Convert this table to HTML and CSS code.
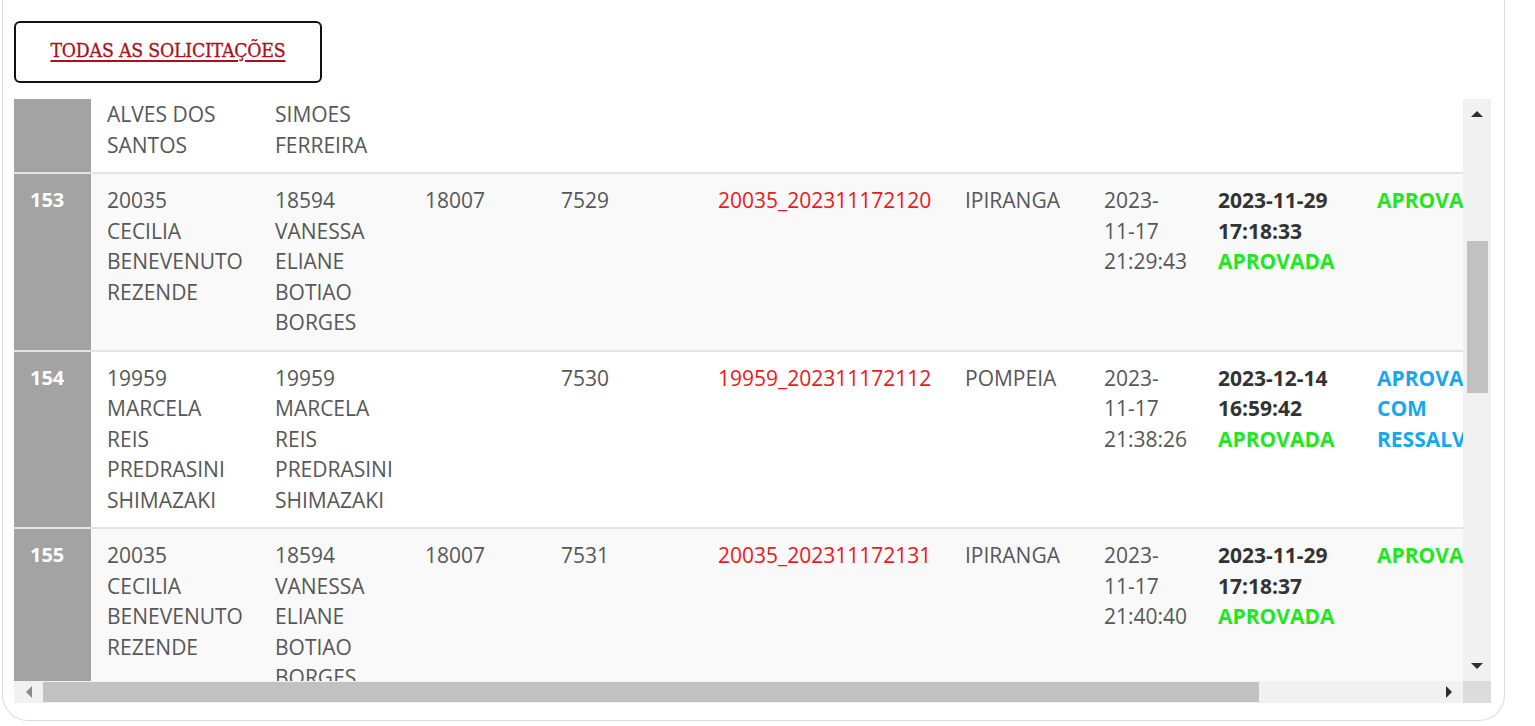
FILE: index.html
```html
<!DOCTYPE html>
<html lang="pt-BR">
<head>
<meta charset="utf-8">
<title>Solicitações</title>
<link rel="stylesheet" href="styles.css">
</head>
<body>
<div class="card">
  <div class="btn-row">
    <a class="btn-all" href="#">TODAS AS SOLICITAÇÕES</a>
  </div>
  <div class="viewport">
    <div class="content">
      <table class="grid">
        <colgroup>
          <col class="c0"><col class="c1"><col class="c2"><col class="c3"><col class="c4">
          <col class="c5"><col class="c6"><col class="c7"><col class="c8"><col class="c9">
        </colgroup>
        <tbody>
          <tr class="row cut">
            <td class="num"></td>
            <td>ALVES DOS<br>SANTOS</td>
            <td>SIMOES<br>FERREIRA</td>
            <td></td><td></td><td></td><td></td><td></td><td></td><td></td>
          </tr>
          <tr class="row alt">
            <td class="num">153</td>
            <td>20035<br>CECILIA<br>BENEVENUTO<br>REZENDE</td>
            <td>18594<br>VANESSA<br>ELIANE<br>BOTIAO<br>BORGES</td>
            <td>18007</td>
            <td>7529</td>
            <td class="red">20035_202311172120</td>
            <td>IPIRANGA</td>
            <td>2023-<br>11-17<br>21:29:43</td>
            <td class="strong">2023-11-29<br>17:18:33<br><span class="green">APROVADA</span></td>
            <td class="strong green">APROVADA</td>
          </tr>
          <tr class="row">
            <td class="num">154</td>
            <td>19959<br>MARCELA<br>REIS<br>PREDRASINI<br>SHIMAZAKI</td>
            <td>19959<br>MARCELA<br>REIS<br>PREDRASINI<br>SHIMAZAKI</td>
            <td></td>
            <td>7530</td>
            <td class="red">19959_202311172112</td>
            <td>POMPEIA</td>
            <td>2023-<br>11-17<br>21:38:26</td>
            <td class="strong">2023-12-14<br>16:59:42<br><span class="green">APROVADA</span></td>
            <td class="strong blue">APROVADA<br>COM<br>RESSALVA</td>
          </tr>
          <tr class="row alt">
            <td class="num">155</td>
            <td>20035<br>CECILIA<br>BENEVENUTO<br>REZENDE</td>
            <td>18594<br>VANESSA<br>ELIANE<br>BOTIAO<br>BORGES</td>
            <td>18007</td>
            <td>7531</td>
            <td class="red">20035_202311172131</td>
            <td>IPIRANGA</td>
            <td>2023-<br>11-17<br>21:40:40</td>
            <td class="strong">2023-11-29<br>17:18:37<br><span class="green">APROVADA</span></td>
            <td class="strong green">APROVADA</td>
          </tr>
        </tbody>
      </table>
    </div>
    <div class="vbar">
      <div class="sb-btn"><span class="arr up"></span></div>
      <div class="vtrack"><div class="vthumb"></div></div>
      <div class="sb-btn"><span class="arr down"></span></div>
    </div>
    <div class="hbar">
      <div class="sb-hbtn"><span class="arr left"></span></div>
      <div class="htrack"><div class="hthumb"></div></div>
      <div class="sb-hbtn"><span class="arr right"></span></div>
    </div>
    <div class="corner"></div>
  </div>
</div>
</body>
</html>
```

FILE: styles.css
```css
html, body {
  margin: 0;
  padding: 0;
  background: #ffffff;
}

body {
  font-family: "Open Sans", "Liberation Sans", sans-serif;
  padding-left: 2px;
  width: 1503px;
}

.card {
  box-sizing: border-box;
  width: 1503px;
  height: 721px;
  border: 1.5px solid #dcdcdc;
  border-top: 0;
  border-radius: 0 0 26px 26px;
  padding: 21px 12px 0 11px;
  background: #ffffff;
}

.btn-row {
  display: flex;
  margin-bottom: 16px;
}

.btn-all {
  box-sizing: border-box;
  width: 308px;
  height: 62px;
  border: 2px solid #111111;
  border-radius: 6px;
  display: flex;
  align-items: center;
  justify-content: center;
  font-family: "DejaVu Serif Condensed", "DejaVu Serif", serif;
  font-stretch: condensed;
  font-size: 19.3px;
  color: #a5121a;
  text-decoration: underline;
  text-decoration-thickness: 1.5px;
  text-underline-offset: 3px;
  letter-spacing: -0.2px;
  padding-bottom: 4px;
  -webkit-text-stroke: 0.3px #a5121a;
}

.viewport {
  display: grid;
  grid-template-columns: 1449px 28px;
  grid-template-rows: 582px 22px;
  width: 1477px;
}

.content {
  overflow: hidden;
  background: #ffffff;
}

.grid {
  table-layout: fixed;
  width: 1547px;
  border-collapse: collapse;
  font-size: 21px;
  line-height: 30.5px;
  color: #575757;
}

.c0 { width: 77px; }
.c1 { width: 168px; }
.c2 { width: 150px; }
.c3 { width: 136px; }
.c4 { width: 157px; }
.c5 { width: 247px; }
.c6 { width: 139px; }
.c7 { width: 114px; }
.c8 { width: 159px; }
.c9 { width: 200px; }

.grid td {
  vertical-align: top;
  padding: 11px 0 12px 16px;
  white-space: nowrap;
  overflow: hidden;
}

.row { background: #ffffff; }
.row.alt { background: #f9f9f9; }
.row + .row td { border-top: 2px solid #e3e3e3; }

.row.cut td {
  padding-top: 0;
}

.grid td.num {
  background: #a3a3a3;
  color: #ffffff;
  font-weight: 700;
  font-size: 20px;
}

.red { color: #ec1820; }
.strong { font-weight: 700; color: #333333; }
.green { color: #1ee81e; }
.grid td.green { color: #1ee81e; }
.grid td.blue { color: #16a8ef; }

/* fake scrollbars */
.vbar {
  background: #f1f1f1;
  display: flex;
  flex-direction: column;
}

.sb-btn {
  height: 30px;
  display: flex;
  align-items: center;
  justify-content: center;
}

.vtrack {
  flex: 1;
  display: flex;
  flex-direction: column;
  align-items: center;
}

.vthumb {
  width: 21px;
  height: 152px;
  margin-top: 112px;
  background: #c1c1c1;
}

.hbar {
  background: #f1f1f1;
  display: flex;
  align-items: stretch;
}

.sb-hbtn {
  width: 29px;
  display: flex;
  align-items: center;
  justify-content: center;
}

.htrack {
  flex: 1;
  display: flex;
  align-items: center;
}

.hthumb {
  width: 1216px;
  height: 20px;
  background: #c1c1c1;
}

.corner {
  background: #dcdcdc;
}

.arr {
  width: 0;
  height: 0;
  border-style: solid;
}

.arr.up {
  border-width: 0 6px 6px 6px;
  border-color: transparent transparent #303030 transparent;
}

.arr.down {
  border-width: 6px 6px 0 6px;
  border-color: #303030 transparent transparent transparent;
}

.arr.left {
  border-width: 6px 6px 6px 0;
  border-color: transparent #8a8a8a transparent transparent;
}

.arr.right {
  border-width: 6px 0 6px 6px;
  border-color: transparent transparent transparent #303030;
}
```
